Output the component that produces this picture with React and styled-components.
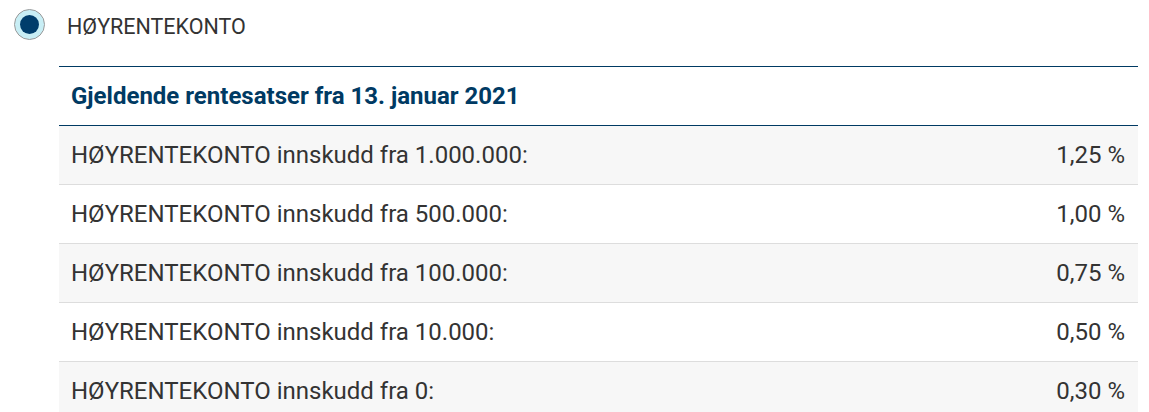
import React from "react";
import styled, { createGlobalStyle } from "styled-components";

const GlobalStyle = createGlobalStyle`
  body {
    margin: 0;
    background: #ffffff;
    font-family: Roboto, "Liberation Sans", sans-serif;
    color: #333333;
  }
`;

const rates = [
  { label: "HØYRENTEKONTO innskudd fra 1.000.000:", rate: "1,25 %" },
  { label: "HØYRENTEKONTO innskudd fra 500.000:", rate: "1,00 %" },
  { label: "HØYRENTEKONTO innskudd fra 100.000:", rate: "0,75 %" },
  { label: "HØYRENTEKONTO innskudd fra 10.000:", rate: "0,50 %" },
  { label: "HØYRENTEKONTO innskudd fra 0:", rate: "0,30 %" },
];

const App = () => {
  return (
    <>
      <GlobalStyle />
      <Page>
        <RadioRow>
          <RadioOuter>
            <RadioDot />
          </RadioOuter>
          <RadioLabel>HØYRENTEKONTO</RadioLabel>
        </RadioRow>

        <RateTable>
          <TableHeader>Gjeldende rentesatser fra 13. januar 2021</TableHeader>
          {rates.map((r, i) => (
            <RateRow key={r.label} $striped={i % 2 === 0}>
              <span>{r.label}</span>
              <span>{r.rate}</span>
            </RateRow>
          ))}
        </RateTable>
      </Page>
    </>
  );
};

const Page = styled.div`
  display: flex;
  flex-direction: column;
  padding: 9px 11px 0 14px;
`;

const RadioRow = styled.div`
  display: flex;
  align-items: center;
  gap: 22px;
  height: 31px;
`;

const RadioOuter = styled.div`
  box-sizing: border-box;
  width: 31px;
  height: 31px;
  border-radius: 50%;
  border: 1px solid #9a9a9a;
  background: #c8eef5;
  display: flex;
  align-items: center;
  justify-content: center;
`;

const RadioDot = styled.div`
  width: 19px;
  height: 19px;
  border-radius: 50%;
  background: #003d6b;
`;

const RadioLabel = styled.div`
  font-size: 21.5px;
  color: #333333;
  margin-top: 4px;
`;

const RateTable = styled.div`
  display: flex;
  flex-direction: column;
  margin-top: 26px;
  margin-left: 45px;
  border-top: 1px solid #003a63;
`;

const TableHeader = styled.div`
  height: 58px;
  display: flex;
  align-items: center;
  padding-left: 12px;
  font-size: 24px;
  font-weight: 700;
  color: #003a63;
  border-bottom: 1px solid #003a63;
`;

const RateRow = styled.div`
  height: 58px;
  display: flex;
  align-items: center;
  justify-content: space-between;
  padding: 0 13px 0 12px;
  font-size: 24px;
  color: #333333;
  background: ${({ $striped }) => ($striped ? "#f7f7f7" : "#ffffff")};
  border-bottom: 1px solid #dddddd;
`;

export default App;
